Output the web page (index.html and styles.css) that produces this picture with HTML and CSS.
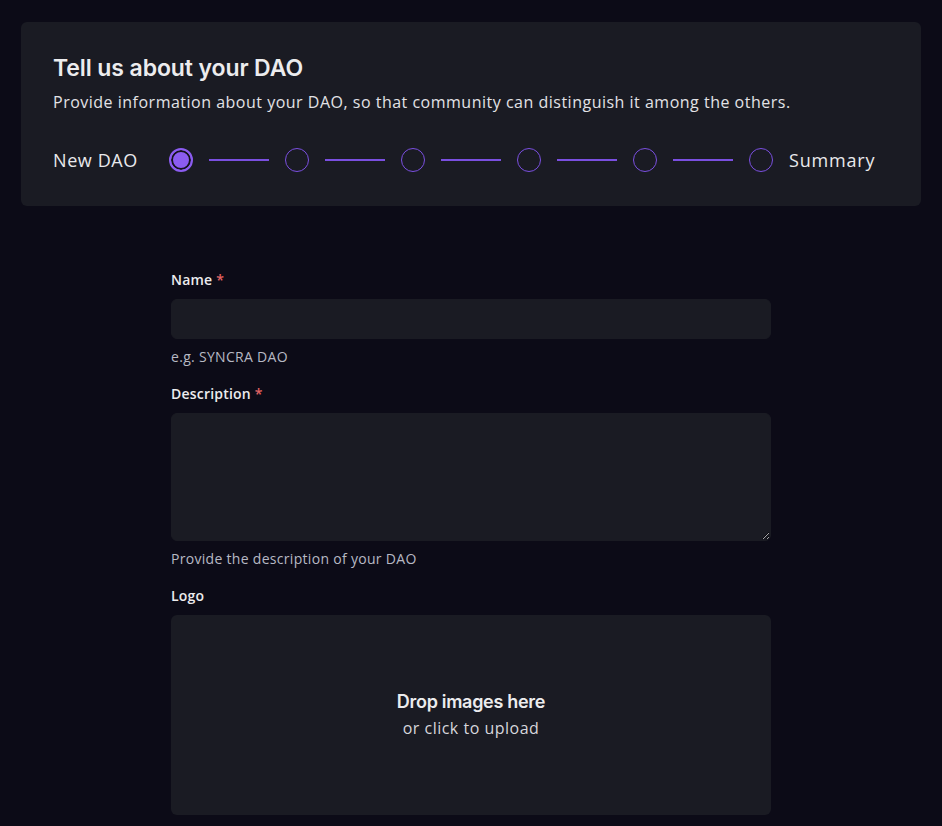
FILE: index.html
```html
<!DOCTYPE html>
<html lang="en">
<head>
<meta charset="utf-8">
<title>Create DAO</title>
<link rel="stylesheet" href="styles.css">
</head>
<body>
<div class="page">
  <section class="intro">
    <h1 class="intro-title">Tell us about your DAO</h1>
    <p class="intro-text">Provide information about your DAO, so that community can distinguish it among the others.</p>
    <div class="stepper">
      <span class="step-label">New DAO</span>
      <span class="step step-active"></span>
      <span class="step-line"></span>
      <span class="step"></span>
      <span class="step-line"></span>
      <span class="step"></span>
      <span class="step-line"></span>
      <span class="step"></span>
      <span class="step-line"></span>
      <span class="step"></span>
      <span class="step-line"></span>
      <span class="step"></span>
      <span class="step-label step-label-end">Summary</span>
    </div>
  </section>

  <form class="form">
    <div class="field">
      <label class="label">Name <span class="req">*</span></label>
      <input class="input" type="text">
      <div class="hint">e.g. SYNCRA DAO</div>
    </div>
    <div class="field">
      <label class="label">Description <span class="req">*</span></label>
      <textarea class="input textarea"></textarea>
      <div class="hint">Provide the description of your DAO</div>
    </div>
    <div class="field">
      <label class="label">Logo</label>
      <div class="dropzone">
        <div class="drop-title">Drop images here</div>
        <div class="drop-sub">or click to upload</div>
      </div>
    </div>
  </form>
</div>
</body>
</html>
```
FILE: styles.css
```css
* { box-sizing: border-box; }
html, body {
  margin: 0;
  padding: 0;
  background: #0c0b17;
  color: #e9e9ec;
  font-family: "Open Sans", "Noto Sans", sans-serif;
}
.page {
  padding: 22px 21px 0 21px;
}
.intro {
  background: #1a1b23;
  border-radius: 6px;
  padding: 30px 32px 0 32px;
  height: 184px;
}
.intro-title {
  margin: 0;
  font-family: Inter, sans-serif;
  font-weight: 600;
  font-size: 23px;
  line-height: 32px;
  letter-spacing: -0.1px;
  color: #ececee;
}
.intro-text {
  margin: 6px 0 0 0;
  font-size: 16px;
  line-height: 24px;
  letter-spacing: 0.5px;
  color: #e2e2e6;
}
.stepper {
  display: flex;
  align-items: center;
  margin-top: 32px;
  height: 28px;
}
.step-label {
  font-size: 18px;
  font-weight: 500;
  letter-spacing: 0.6px;
  color: #e9e9ec;
  width: 116px;
  flex: none;
}
.step-label-end {
  width: auto;
  margin-left: 16px;
  letter-spacing: 0.8px;
}
.step {
  width: 24px;
  height: 24px;
  border-radius: 50%;
  border: 1.5px solid #7a4fe0;
  flex: none;
}
.step-active {
  background: #8b5cf0;
  border: 2px solid #8b5cf0;
  box-shadow: inset 0 0 0 2px #14131c;
}
.step-line {
  width: 60px;
  height: 2px;
  background: #7a4fe0;
  margin: 0 16px;
  flex: none;
}
.form {
  width: 600px;
  margin: 63px auto 0 auto;
  display: flex;
  flex-direction: column;
  gap: 16px;
}
.field {
  display: flex;
  flex-direction: column;
}
.label {
  font-size: 14px;
  font-weight: 600;
  line-height: 22px;
  letter-spacing: 0.2px;
  color: #ececee;
  margin-bottom: 8px;
}
.req { color: #e36464; }
.input {
  height: 40px;
  background: #1a1b23;
  border: 1px solid #1a1b23;
  border-radius: 6px;
  color: #e9e9ec;
  font: inherit;
  padding: 0 12px;
  outline: none;
}
.textarea {
  height: 128px;
  resize: vertical;
  padding: 8px 12px;
}
.hint {
  font-size: 14px;
  line-height: 20px;
  letter-spacing: 0.3px;
  color: #b7b9c4;
  margin-top: 8px;
}
.dropzone {
  height: 200px;
  background: #1a1b23;
  border-radius: 6px;
  display: flex;
  flex-direction: column;
  align-items: center;
  justify-content: center;
  gap: 1px;
  padding-bottom: 2px;
}
.drop-title {
  font-family: Inter, sans-serif;
  font-weight: 600;
  font-size: 18px;
  line-height: 26px;
  letter-spacing: -0.3px;
  color: #ececee;
}
.drop-sub {
  font-size: 16px;
  line-height: 24px;
  letter-spacing: 0.5px;
  color: #d6d6dc;
}
```
